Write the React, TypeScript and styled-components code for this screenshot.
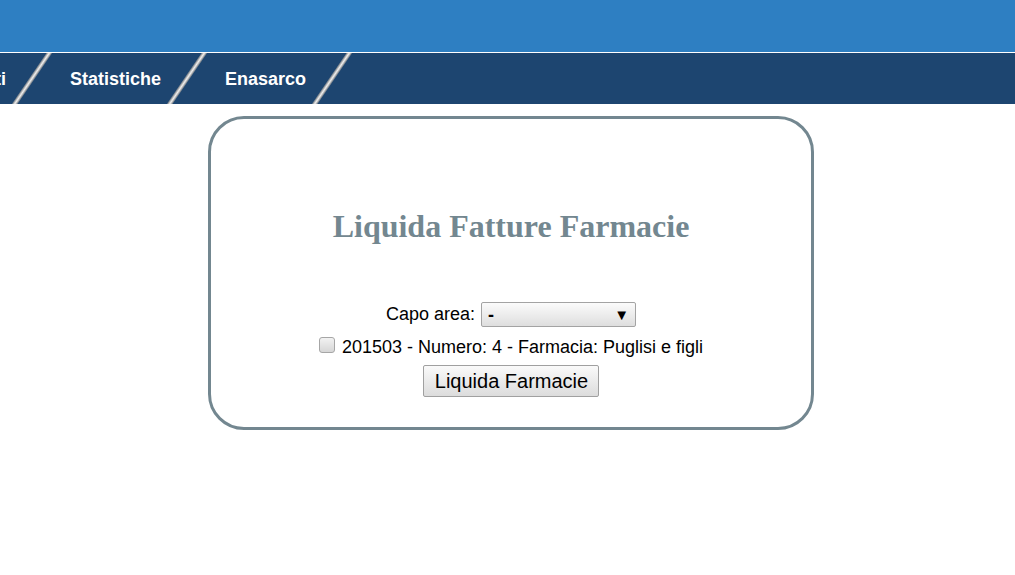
import React from "react";
import styled, { createGlobalStyle } from "styled-components";

const Global = createGlobalStyle`
  html, body { margin: 0; padding: 0; background: #ffffff; }
  body { font-family: "Liberation Sans", Arial, sans-serif; }
`;

const TopBar = styled.header`
  height: 52px;
  background: #2e7fc2;
  border-bottom: 1px solid #ffffff;
`;

const Nav = styled.nav`
  height: 51px;
  background: #1d4570;
  overflow: hidden;
`;

const NavRow = styled.div`
  display: flex;
  align-items: stretch;
  height: 100%;
  margin-left: -103px;
`;

const NavLink = styled.a`
  display: flex;
  align-items: center;
  padding: 1px 5px 0 18px;
  color: #ffffff;
  font-weight: bold;
  font-size: 18px;
  white-space: nowrap;
  text-decoration: none;
`;

const SepSvg = styled.svg`
  display: block;
  flex: none;
`;

const Separator = () => (
  <SepSvg width="41" height="51" viewBox="0 0 41 51">
    <line x1="3" y1="52" x2="39" y2="-1" stroke="#8a9096" strokeWidth="4.5" />
    <line x1="3" y1="52" x2="39" y2="-1" stroke="#c9c9c9" strokeWidth="2.6" />
    <line x1="3" y1="52" x2="39" y2="-1" stroke="#efefef" strokeWidth="1" />
  </SepSvg>
);

const Main = styled.main`
  display: flex;
  justify-content: center;
  padding: 12px 0 0 7px;
`;

const Card = styled.section`
  width: 600px;
  border: 3px solid #738790;
  border-radius: 36px;
  padding: 89px 0 30px;
  display: flex;
  flex-direction: column;
  align-items: center;
`;

const Title = styled.h1`
  margin: 0;
  font-family: "Liberation Serif", "Times New Roman", serif;
  font-weight: bold;
  font-size: 32px;
  line-height: 37px;
  color: #738790;
`;

const Form = styled.form`
  margin-top: 57px;
  display: flex;
  flex-direction: column;
  align-items: center;
  font-size: 18px;
  color: #000000;
`;

const FieldRow = styled.div`
  display: flex;
  align-items: center;
  height: 25px;
  gap: 6px;
  font-size: 18px;
`;

const SelectWrap = styled.span`
  position: relative;
  display: inline-block;
  width: 155px;
  height: 25px;
`;

const Select = styled.select`
  appearance: none;
  -webkit-appearance: none;
  width: 100%;
  height: 100%;
  box-sizing: border-box;
  border: 1px solid #a3a3a3;
  border-radius: 2px;
  background: linear-gradient(#fbfbfb, #dedede);
  font-family: "Liberation Sans", Arial, sans-serif;
  font-size: 18px;
  font-weight: bold;
  padding: 0 0 0 6px;
  color: #000;
`;

const Arrow = styled.span`
  position: absolute;
  right: 7px;
  top: 50%;
  transform: translateY(-52%);
  font-size: 15px;
  pointer-events: none;
  color: #000;
`;

const CheckRow = styled.label`
  display: flex;
  align-items: center;
  margin-top: 8px;
  height: 24px;
  gap: 7px;
  font-size: 18px;
`;

const Check = styled.input`
  appearance: none;
  -webkit-appearance: none;
  width: 16px;
  height: 16px;
  margin: -4px 0 0 0;
  box-sizing: border-box;
  border: 1px solid #a6a6a6;
  border-radius: 3px;
  background: linear-gradient(#f2f2f2, #d6d6d6);
`;

const Button = styled.button`
  margin-top: 6px;
  height: 32px;
  padding: 0 10px 0 11px;
  border: 1px solid #a0a0a0;
  border-radius: 2px;
  background: linear-gradient(#fafafa, #dcdcdc);
  font-family: "Liberation Sans", Arial, sans-serif;
  font-size: 20px;
  color: #000;
`;

export default function App() {
  return (
    <>
      <Global />
      <TopBar />
      <Nav>
        <NavRow>
          <NavLink>Pagamenti</NavLink>
          <Separator />
          <NavLink>Statistiche</NavLink>
          <Separator />
          <NavLink>Enasarco</NavLink>
          <Separator />
        </NavRow>
      </Nav>
      <Main>
        <Card>
          <Title>Liquida Fatture Farmacie</Title>
          <Form onSubmit={(e) => e.preventDefault()}>
            <FieldRow>
              <span>Capo area:</span>
              <SelectWrap>
                <Select defaultValue="-">
                  <option value="-">-</option>
                </Select>
                <Arrow>▼</Arrow>
              </SelectWrap>
            </FieldRow>
            <CheckRow>
              <Check type="checkbox" />
              <span>201503 - Numero: 4 - Farmacia: Puglisi e figli</span>
            </CheckRow>
            <Button type="submit">Liquida Farmacie</Button>
          </Form>
        </Card>
      </Main>
    </>
  );
}
